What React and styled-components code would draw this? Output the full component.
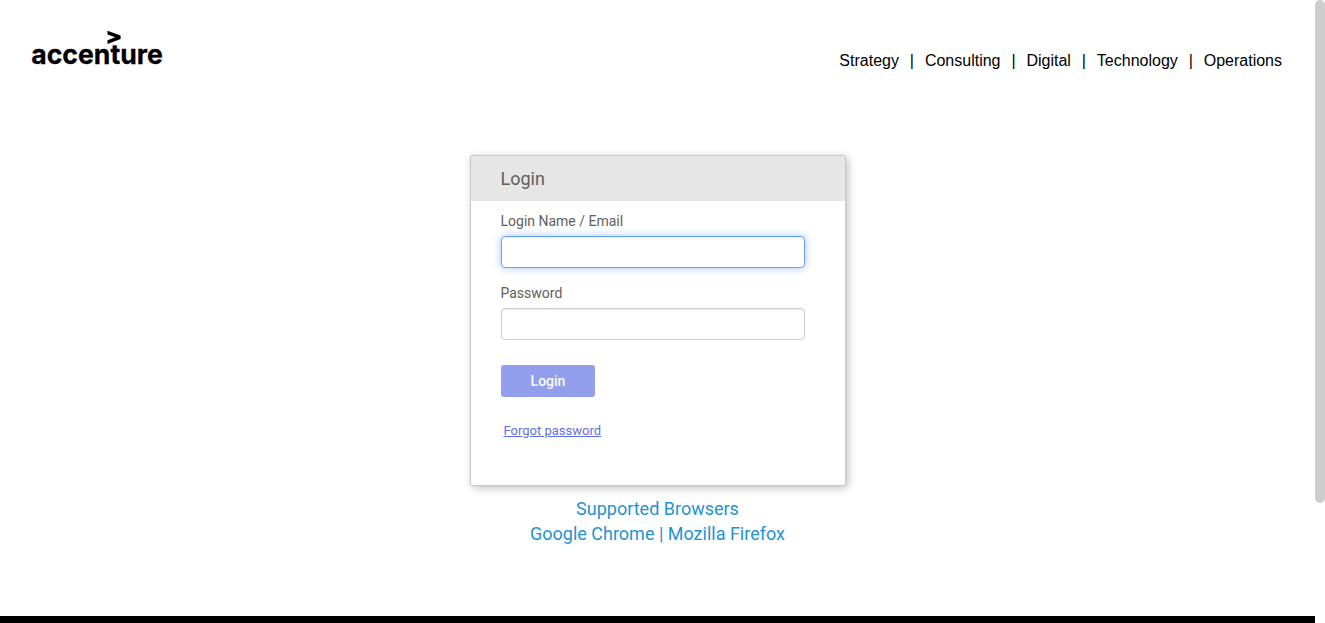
import React from "react";
import styled, { createGlobalStyle } from "styled-components";

const GlobalStyle = createGlobalStyle`
  *, *::before, *::after { box-sizing: border-box; }
  html, body { margin: 0; overflow: hidden; background: #fff; }
  body { font-family: Roboto, sans-serif; color: #606060; }
`;

const Viewport = styled.div`
  display: flex;
  height: 623px;
`;

const Page = styled.div`
  flex: 1;
  display: flex;
  flex-direction: column;
`;

const ScrollTrack = styled.div`
  width: 10px;
`;

const ScrollThumb = styled.div`
  height: 503px;
  border-radius: 5px;
  background: #cdcdcd;
`;

const Header = styled.header`
  display: flex;
  justify-content: space-between;
  align-items: flex-start;
  height: 155px;
  padding: 28px 33px 0 30px;
`;

const Logo = styled.svg`
  width: 136px;
  height: 50px;
  font-family: Inter, "Liberation Sans", sans-serif;
  font-size: 27.5px;
  font-weight: 700;
`;

const Nav = styled.nav`
  display: flex;
  gap: 10.9px;
  padding-top: 24px;
  color: #000;
  font: 16px/18px "Liberation Sans", Arial, sans-serif;
`;

const Main = styled.main`
  flex: 1;
  display: flex;
  flex-direction: column;
  align-items: center;
`;

const Card = styled.form`
  width: 376px;
  height: 331px;
  border: 1px solid #c8c8c8;
  border-radius: 2px;
  background: #fff;
  box-shadow: 2px 2px 8px rgba(0, 0, 0, 0.26);
`;

const CardTitle = styled.h1`
  height: 45px;
  margin: 0;
  padding-left: 30px;
  background: #e6e6e6;
  font-size: 18px;
  font-weight: 400;
  line-height: 45px;
`;

const CardBody = styled.div`
  display: flex;
  flex-direction: column;
  align-items: flex-start;
  padding: 10px 40px 0 30px;
`;

const Field = styled.label`
  display: block;
  width: 100%;
  height: 72px;
  font-size: 14px;
  line-height: 20px;
`;

const Input = styled.input`
  display: block;
  width: 304px;
  height: 32px;
  margin-top: 5px;
  padding: 4px 8px;
  border: 1px solid ${(p) => (p.$active ? "#6a9eef" : "#ccc")};
  border-radius: 4px;
  outline: none;
  background: #fff;
  box-shadow: ${(p) =>
    p.$active
      ? "inset 0 1px 1px rgba(0,0,0,.075), 0 0 8px rgba(102,160,245,.6)"
      : "inset 0 1px 1px rgba(0,0,0,.075)"};
`;

const LoginButton = styled.button`
  width: 94px;
  height: 32px;
  margin-top: 10px;
  padding: 0 0 0 1px;
  border: 0;
  border-radius: 3px;
  background: #919eec;
  color: #fafafd;
  font: 500 14px/32px Roboto, sans-serif;
`;

const ForgotLink = styled.a`
  margin: 24px 0 0 3px;
  color: #5f6fea;
  font-size: 13px;
  line-height: 20px;
  text-decoration: underline;
`;

const Browsers = styled.div`
  margin-top: 10px;
  color: #2492d3;
  font-size: 18px;
  line-height: 25px;
  text-align: center;
`;

const Footer = styled.footer`
  height: 7px;
  background: #000;
`;

const sections = ["Strategy", "Consulting", "Digital", "Technology", "Operations"];

export default function App() {
  return (
    <>
      <GlobalStyle />
      <Viewport>
        <Page>
          <Header>
            <Logo viewBox="0 0 136 50" aria-label="accenture">
              <text x="1.2" y="36.2" textLength="131.6" lengthAdjust="spacingAndGlyphs" stroke="#000" strokeWidth="0.3">accenture</text>
              <path d="M77.5 2.8 90.6 7.5v3.5L77.5 16v-3.8l7.8-2.9-7.8-2.7z" />
            </Logo>
            <Nav>
              {sections.map((name, i) => (
                <React.Fragment key={name}>
                  {i > 0 && <span>|</span>}
                  <span>{name}</span>
                </React.Fragment>
              ))}
            </Nav>
          </Header>
          <Main>
            <Card>
              <CardTitle>Login</CardTitle>
              <CardBody>
                <Field>
                  Login Name / Email
                  <Input type="text" $active />
                </Field>
                <Field>
                  Password
                  <Input type="password" />
                </Field>
                <LoginButton type="button">Login</LoginButton>
                <ForgotLink>Forgot password</ForgotLink>
              </CardBody>
            </Card>
            <Browsers>
              <div>Supported Browsers</div>
              <div>Google Chrome | Mozilla Firefox</div>
            </Browsers>
          </Main>
          <Footer />
        </Page>
        <ScrollTrack>
          <ScrollThumb />
        </ScrollTrack>
      </Viewport>
    </>
  );
}
